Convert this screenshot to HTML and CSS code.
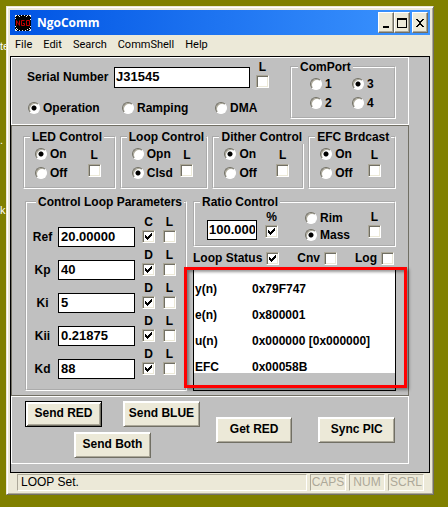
FILE: index.html
```html
<!DOCTYPE html>
<html lang="en">
<head>
<meta charset="utf-8">
<title>NgoComm</title>
<link rel="stylesheet" href="styles.css">
</head>
<body>
<span class="desk desk-a">te</span>
<span class="desk desk-b">.</span>
<span class="desk desk-c">k</span>
<main class="window">
  <header class="titlebar">
    <svg class="logo" viewBox="0 0 16 16" aria-hidden="true">
      <rect width="16" height="16" fill="#000"/>
      <path d="M0 0h2v1h-1v1h-1zM3 0h1v1h-1zM6 0h1v1h-1zM9 0h1v1h-1zM12 0h1v1h-1zM14 0h2v2h-1v-1h-1zM0 3h1v1h-1zM15 4h1v1h-1zM0 11h1v1h-1zM15 11h1v1h-1zM0 14h1v1h1v1h-2zM1 13h1v1h-1zM4 15h1v1h-1zM7 15h1v1h-1zM10 15h1v1h-1zM12 14h1v1h-1zM14 15h1v-1h1v2h-2zM14 13h1v1h-1zM4 1h1v1h-1zM11 1h1v1h-1zM2 14h1v1h-1z" fill="#eee"/>
      <path d="M1.500 10.500V5.500L4.500 10.500V5.500M9.500 5.500H6.500V10.500H9.500V8.500H8M11.500 5.500H14.500V10.500H11.500z" fill="none" stroke="#c00000"/>
    </svg>
    <h1 class="title">NgoComm</h1>
    <div class="controls">
      <button class="ctl" aria-label="Minimize"><svg viewBox="0 0 12 12"><path d="M3 9h6v2H3z"/></svg></button>
      <button class="ctl" aria-label="Maximize"><svg viewBox="0 0 12 12"><path d="M1 1h10v10H1zM2 3v7h8V3z" fill-rule="evenodd"/></svg></button>
      <button class="ctl ctl-close" aria-label="Close"><svg viewBox="0 0 12 12"><path d="M2 2h2v1h1v1h2v-1h1v-1h2v1h-1v1h-1v1h-1v2h1v1h1v1h1v1h-2v-1h-1v-1h-2v1h-1v1h-2v-1h1v-1h1v-1h1v-2h-1v-1h-1v-1h-1z"/></svg></button>
    </div>
  </header>
  <nav class="menu">
    <a href="#file">File</a><a href="#edit">Edit</a><a href="#search">Search</a><a href="#shell">CommShell</a><a href="#help">Help</a>
  </nav>
  <form class="client">
    <section class="panel top">
      <div class="top-left">
        <div class="serial">
          <label for="sn">Serial Number</label>
          <input class="text" id="sn" type="text" value="J31545">
          <label class="tick">L<input type="checkbox"></label>
        </div>
        <div class="modes">
          <label class="opt"><input type="radio" name="mode" checked>Operation</label>
          <label class="opt"><input type="radio" name="mode">Ramping</label>
          <label class="opt"><input type="radio" name="mode">DMA</label>
        </div>
      </div>
      <fieldset class="comport">
        <legend>ComPort</legend>
        <div class="ports">
          <label class="opt"><input type="radio" name="port">1</label>
          <label class="opt"><input type="radio" name="port" checked>3</label>
          <label class="opt"><input type="radio" name="port">2</label>
          <label class="opt"><input type="radio" name="port">4</label>
        </div>
      </fieldset>
    </section>

    <section class="panel middle">
      <div class="switches">
        <fieldset>
          <legend>LED Control</legend>
          <div class="switch">
            <div class="opts">
              <label class="opt"><input type="radio" name="led" checked>On</label>
              <label class="opt"><input type="radio" name="led">Off</label>
            </div>
            <label class="tick">L<input type="checkbox"></label>
          </div>
        </fieldset>
        <fieldset>
          <legend>Loop Control</legend>
          <div class="switch">
            <div class="opts">
              <label class="opt"><input type="radio" name="loop">Opn</label>
              <label class="opt"><input type="radio" name="loop" checked>Clsd</label>
            </div>
            <label class="tick">L<input type="checkbox"></label>
          </div>
        </fieldset>
        <fieldset>
          <legend>Dither Control</legend>
          <div class="switch">
            <div class="opts">
              <label class="opt"><input type="radio" name="dither" checked>On</label>
              <label class="opt"><input type="radio" name="dither">Off</label>
            </div>
            <label class="tick">L<input type="checkbox"></label>
          </div>
        </fieldset>
        <fieldset>
          <legend>EFC Brdcast</legend>
          <div class="switch">
            <div class="opts">
              <label class="opt"><input type="radio" name="efc" checked>On</label>
              <label class="opt"><input type="radio" name="efc">Off</label>
            </div>
            <label class="tick">L<input type="checkbox"></label>
          </div>
        </fieldset>
      </div>

      <div class="lower">
        <fieldset class="params">
          <legend>Control Loop Parameters</legend>
          <div class="param"><label for="ref">Ref</label><input class="text" id="ref" type="text" value="20.00000"><label class="tick">C<input type="checkbox" checked></label><label class="tick">L<input type="checkbox"></label></div>
          <div class="param"><label for="kp">Kp</label><input class="text" id="kp" type="text" value="40"><label class="tick">D<input type="checkbox" checked></label><label class="tick">L<input type="checkbox"></label></div>
          <div class="param"><label for="ki">Ki</label><input class="text" id="ki" type="text" value="5"><label class="tick">D<input type="checkbox" checked></label><label class="tick">L<input type="checkbox"></label></div>
          <div class="param"><label for="kii">Kii</label><input class="text" id="kii" type="text" value="0.21875"><label class="tick">D<input type="checkbox" checked></label><label class="tick">L<input type="checkbox"></label></div>
          <div class="param"><label for="kd">Kd</label><input class="text" id="kd" type="text" value="88"><label class="tick">D<input type="checkbox" checked></label><label class="tick">L<input type="checkbox"></label></div>
        </fieldset>

        <div class="right">
          <fieldset class="ratio">
            <legend>Ratio Control</legend>
            <div class="ratio-row">
              <input class="text" type="text" value="100.000" aria-label="Ratio">
              <label class="tick">%<input type="checkbox" checked></label>
              <div class="opts">
                <label class="opt"><input type="radio" name="ratio">Rim</label>
                <label class="opt"><input type="radio" name="ratio" checked>Mass</label>
              </div>
              <label class="tick">L<input type="checkbox"></label>
            </div>
          </fieldset>
          <div class="flags">
            <label>Loop Status<input type="checkbox" checked></label>
            <label>Cnv<input type="checkbox"></label>
            <label>Log<input type="checkbox"></label>
          </div>
          <div class="output">
            <dl class="values">
              <dt>y(n)</dt><dd>0x79F747</dd>
              <dt>e(n)</dt><dd>0x800001</dd>
              <dt>u(n)</dt><dd>0x000000 [0x000000]</dd>
              <dt>EFC</dt><dd>0x00058B</dd>
            </dl>
            <div class="highlight"></div>
          </div>
        </div>
      </div>
    </section>

    <section class="panel actions">
      <div class="send">
        <button type="button" class="btn default">Send RED</button>
        <button type="button" class="btn">Send BLUE</button>
        <button type="button" class="btn both">Send Both</button>
      </div>
      <button type="button" class="btn">Get RED</button>
      <button type="button" class="btn">Sync PIC</button>
    </section>
  </form>
  <footer class="status">
    <span class="cell message">LOOP Set.</span>
    <span class="cell key">CAPS</span>
    <span class="cell key">NUM</span>
    <span class="cell key">SCRL</span>
  </footer>
</main>
</body>
</html>
```
FILE: styles.css
```css
* { box-sizing: border-box; }

body {
  margin: 0;
  padding: 6px 14px 12px 6px;
  background: #808000;
  color: #000;
  font: bold 12px/14px "Liberation Sans", Arial, sans-serif;
}

/* Text of the desktop that shows beside the window */
.desk {
  position: absolute;
  left: 0;
  color: #fff;
  font: 11px/14px "Liberation Sans", sans-serif;
}
.desk-a { top: 39px; }
.desk-b { top: 133px; }
.desk-c { top: 203px; }

.window {
  position: relative;
  padding: 3px;
  background: #ece9d8;
  border: 1px solid;
  border-color: #ece9d8 #716f64 #716f64 #ece9d8;
  box-shadow: inset 1px 1px #fff, inset -1px -1px #aca899;
}

.titlebar {
  display: flex;
  align-items: center;
  height: 25px;
  padding: 0 2px 0 5px;
  background: linear-gradient(90deg, #0054e3, #3d95ff);
}
.logo { width: 16px; height: 16px; margin-right: 6px; }
.title {
  margin: 0;
  color: #fff;
  font: bold 12px/20px "Open Sans", sans-serif;
}
.controls { display: flex; margin-left: auto; }
.ctl {
  display: flex;
  align-items: center;
  justify-content: center;
  width: 16px;
  height: 21px;
  padding: 0;
  background: #ece9d8;
  border: 1px solid;
  border-color: #fff #716f64 #716f64 #fff;
  box-shadow: inset -1px -1px #aca899;
}
.ctl svg { flex: none; width: 12px; height: 12px; }
.ctl-close { margin-left: 2px; }

.menu {
  display: flex;
  gap: 11px;
  height: 21px;
  padding: 0 5px;
  font: 11px/20px Roboto, sans-serif;
}
.menu a { color: #000; text-decoration: none; }

.client {
  padding: 0 20px 8px 0;
  background: #c0c0c0;
  border: 1px solid #000;
}

.panel { border: 1px solid #fff; }
.middle { border-color: #716f64; }

fieldset {
  min-width: 0;
  margin: 0;
  padding: 0;
  border: 2px groove #fff;
}
legend { margin-left: 5px; padding: 0 2px; white-space: nowrap; }

.opt { display: flex; align-items: center; gap: 3px; }
.opts { display: grid; gap: 5px; }
.tick {
  display: flex;
  flex-direction: column;
  align-items: center;
  gap: 1px;
  width: 13px;
}

input { margin: 0; }
input[type="radio"] {
  appearance: none;
  flex: none;
  width: 12px;
  height: 12px;
  border: 1px solid;
  border-color: #716f64 #fff #fff #716f64;
  border-radius: 50%;
  background: #fff;
  box-shadow: inset 1px 1px #aca899;
}
input[type="radio"]:checked {
  background: radial-gradient(circle, #000 2px, #fff 3px);
}
input[type="checkbox"] {
  appearance: none;
  flex: none;
  width: 13px;
  height: 13px;
  border: 1px solid;
  border-color: #aca899 #fff #fff #aca899;
  background: #fff;
  box-shadow: inset 1px 1px #716f64, inset -1px -1px #ece9d8;
}
input[type="checkbox"]:checked {
  background: #fff url("data:image/svg+xml,%3Csvg xmlns='http://www.w3.org/2000/svg' viewBox='0 0 11 11'%3E%3Cpath d='M2 4v3h1v1h1v1h1v-1h1v-1h1v-1h1v-1h1v-3h-1v1h-1v1h-1v1h-1v1h-1v-1h-1v-1z'/%3E%3C/svg%3E") center / 11px 11px no-repeat;
}
.text {
  min-width: 0;
  height: 20px;
  padding: 0 2px 2px;
  border: 1px solid #000;
  border-radius: 0;
  background: #fff;
  color: #000;
  font: bold 13px/16px "Liberation Sans", Arial, sans-serif;
}

.top {
  display: flex;
  justify-content: space-between;
  padding: 2px 12px 5px 15px;
}
.serial { display: flex; align-items: flex-end; }
.serial label:first-child { width: 87px; margin-bottom: 4px; }
.serial .text { width: 136px; height: 21px; padding: 0 1px 3px; }
.serial .tick { margin-left: 6px; }
.modes {
  display: grid;
  grid-template-columns: 94px 93px auto;
  margin-top: 13px;
  padding-left: 1px;
}
.comport { width: 106px; height: 59px; }
.comport legend { margin-left: 6px; }
.ports {
  display: grid;
  grid-template-columns: 42px auto;
  gap: 5px 0;
  padding: 3px 0 0 18px;
}

.middle { padding: 4px 12px 4px 11px; }
.switches {
  display: grid;
  grid-template-columns: 93fr 89fr 92fr 88fr;
  gap: 4px;
}
.switch {
  display: flex;
  justify-content: space-between;
  padding: 3px 13px 7px 10px;
}
.switch .tick { gap: 2px; margin-top: 1px; }

.lower {
  display: flex;
  gap: 6px;
  margin: 6px 0 0 2px;
}
.params { width: 162px; padding: 5px 6px 7px 4px; }
.param {
  display: flex;
  align-items: flex-end;
  height: 33px;
}
.param > label:first-child { width: 27px; margin-bottom: 3px; text-align: center; padding-right: 4px; }
.param .text { width: 77px; }
.param .tick { margin: 0 0 4px 7px; }
.param .tick + .tick { margin-left: 8px; }

.right { flex: 1; min-width: 0; }
.ratio-row {
  display: flex;
  align-items: flex-end;
  padding: 1px 13px 3px 12px;
}
.ratio .text { width: 50px; margin-bottom: 2px; padding: 0 1px 2px; }
.ratio .tick { margin: 0 0 4px 8px; }
.ratio .tick:last-child { margin-left: auto; }
.ratio .opts { gap: 3px; margin-left: 27px; }

.flags {
  display: flex;
  justify-content: space-between;
  margin: 4px 2px 2px 0;
}
.flags label { display: flex; align-items: center; gap: 4px; }

.output {
  position: relative;
  height: 124px;
  border: 1px solid #000;
}
.values {
  display: grid;
  grid-template-columns: 57px 1fr;
  row-gap: 14px;
  margin: 0;
  padding: 15px 0 0 1px;
  background: #fff;
  line-height: 12px;
}
.values dd { margin: 0; white-space: nowrap; }
.highlight {
  position: absolute;
  inset: -1px -12px 2px -10px;
  border: 3px solid #f00;
  box-shadow: 2px 2px 3px #0006, inset 2px 2px 3px #0006;
}

.actions {
  display: flex;
  align-items: center;
  gap: 26px;
  padding: 4px 13px 5px;
}
.send {
  display: flex;
  flex-wrap: wrap;
  justify-content: space-between;
  gap: 5px 0;
  width: 176px;
  margin-right: -10px;
}
.both { margin: 0 auto; }
.btn {
  width: 77px;
  height: 26px;
  padding: 0 0 2px;
  border: 1px solid;
  border-color: #fff #716f64 #716f64 #fff;
  background: #ece9d8;
  box-shadow: inset 1px 1px #fff, inset -1px -1px #aca899;
  color: #000;
  font: inherit;
  white-space: nowrap;
}
.default {
  border-color: #000;
  box-shadow: inset 1px 1px #fff, inset -1px -1px #716f64, inset 2px 2px #fff, inset -2px -2px #aca899;
}

.status {
  display: flex;
  gap: 3px;
  padding: 1px 6px 0 7px;
  font-weight: normal;
}
.cell {
  height: 17px;
  padding: 0 3px;
  border: 1px solid;
  border-color: #aca899 #fff #fff #aca899;
  line-height: 15px;
}
.message { flex: 1; font-size: 12px; }
.key { width: 36px; padding: 0; color: #aca899; font-size: 12px; text-align: center; }
```
